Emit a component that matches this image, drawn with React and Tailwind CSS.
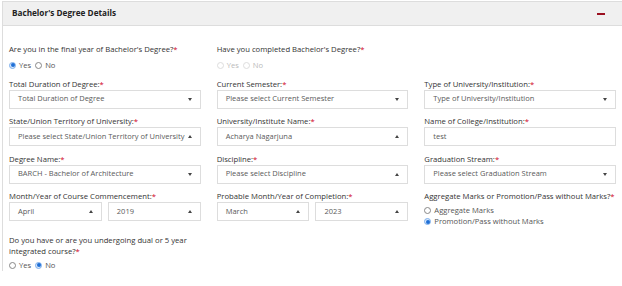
import React from 'react'

const Req = () => <span className="text-[#d0021b]">*</span>

function Label({ children, className = '' }) {
  return (
    <div className={`text-[7.7px] text-[#333] ${className}`}>
      {children}
      <Req />
    </div>
  )
}

function Caret({ up }) {
  return up ? (
    <span className="h-0 w-0 shrink-0 border-x-[2.5px] border-b-[3px] border-x-transparent border-b-[#444]" />
  ) : (
    <span className="h-0 w-0 shrink-0 border-x-[2.5px] border-t-[3px] border-x-transparent border-t-[#444]" />
  )
}

function Select({ value, up }) {
  return (
    <div className="flex h-[19px] items-center justify-between gap-[2px] border border-[#ddd] bg-white pl-[8px] pr-[8px] text-[7.5px] text-[#5a5a5a]">
      <span className="whitespace-nowrap">{value}</span>
      <Caret up={up} />
    </div>
  )
}

function Input({ value }) {
  return (
    <div className="flex h-[19px] items-center border border-[#ddd] bg-white pl-[8px] text-[7.5px] text-[#5a5a5a]">
      {value}
    </div>
  )
}

function Radio({ checked, disabled, label }) {
  return (
    <span className={`inline-flex items-center gap-[3px] ${disabled ? 'text-[#bbb]' : 'text-[#555]'}`}>
      <span
        className={`flex h-[7px] w-[7px] items-center justify-center rounded-full border ${
          checked ? 'border-[#7fb0ec] bg-[#d7e7fb]' : disabled ? 'border-[#ddd]' : 'border-[#888]'
        }`}
      >
        {checked && <span className="h-[4px] w-[4px] rounded-full bg-[#1f6fd6]" />}
      </span>
      {label}
    </span>
  )
}

function Field({ label, children }) {
  return (
    <div>
      <Label className="mb-[1px] leading-[10px]">{label}</Label>
      {children}
    </div>
  )
}

export default function App() {
  return (
    <div
      className="h-[286px] w-[622px] overflow-hidden bg-white"
      style={{ fontFamily: '"Open Sans", "Liberation Sans", sans-serif' }}
    >
      <div className="ml-[2px] mt-[1px] border-l border-t border-[#ddd]">
        <div className="flex h-[24px] items-center justify-between border-b border-[#ddd] bg-[#f0f0f0] pl-[9px] pr-[17px]">
          <span className="text-[8.2px] font-bold text-[#222]">Bachelor's Degree Details</span>
          <span className="h-[2px] w-[8px] bg-[#9b1020]" />
        </div>

        <div className="px-[6px] pt-[18px]">
          <div className="grid grid-cols-3 gap-x-[16px] gap-y-[7.5px]">
            <div>
              <Label className="leading-[10px]">Are you in the final year of Bachelor's Degree?</Label>
              <div className="mt-[5px] flex items-center gap-[4px] text-[7.6px] leading-[12px]">
                <Radio checked label="Yes" />
                <Radio label="No" />
              </div>
            </div>
            <div>
              <Label className="leading-[10px]">Have you completed Bachelor's Degree?</Label>
              <div className="mt-[5px] flex items-center gap-[4px] text-[7.6px] leading-[12px]">
                <Radio disabled label="Yes" />
                <Radio disabled label="No" />
              </div>
            </div>
            <div />

            <Field label="Total Duration of Degree:">
              <Select value="Total Duration of Degree" />
            </Field>
            <Field label="Current Semester:">
              <Select value="Please select Current Semester" />
            </Field>
            <Field label="Type of University/Institution:">
              <Select value="Type of University/Institution" />
            </Field>

            <Field label="State/Union Territory of University:">
              <Select value="Please select State/Union Territory of University" up />
            </Field>
            <Field label="University/Institute Name:">
              <Select value="Acharya Nagarjuna" up />
            </Field>
            <Field label="Name of College/Institution:">
              <Input value="test" />
            </Field>

            <Field label="Degree Name:">
              <Select value="BARCH - Bachelor of Architecture" />
            </Field>
            <Field label="Discipline:">
              <Select value="Please select Discipline" up />
            </Field>
            <Field label="Graduation Stream:">
              <Select value="Please select Graduation Stream" />
            </Field>

            <Field label="Month/Year of Course Commencement:">
              <div className="grid grid-cols-2 gap-x-[6px]">
                <Select value="April" up />
                <Select value="2019" up />
              </div>
            </Field>
            <Field label="Probable Month/Year of Completion:">
              <div className="grid grid-cols-2 gap-x-[6px]">
                <Select value="March" up />
                <Select value="2023" up />
              </div>
            </Field>
            <div>
              <Label className="leading-[10px]">Aggregate Marks or Promotion/Pass without Marks?</Label>
              <div className="mt-[4px] flex flex-col text-[7.6px] leading-[11px]">
                <Radio label="Aggregate Marks" />
                <Radio checked label="Promotion/Pass without Marks" />
              </div>
            </div>
          </div>

          <div className="mt-[8px] w-[191px]">
            <Label className="leading-[10.5px]">
              Do you have or are you undergoing dual or 5 year
              <br />
              integrated course?
            </Label>
            <div className="mt-[3px] flex items-center gap-[4px] text-[7.6px] leading-[12px]">
              <Radio label="Yes" />
              <Radio checked label="No" />
            </div>
          </div>
        </div>
      </div>
    </div>
  )
}
